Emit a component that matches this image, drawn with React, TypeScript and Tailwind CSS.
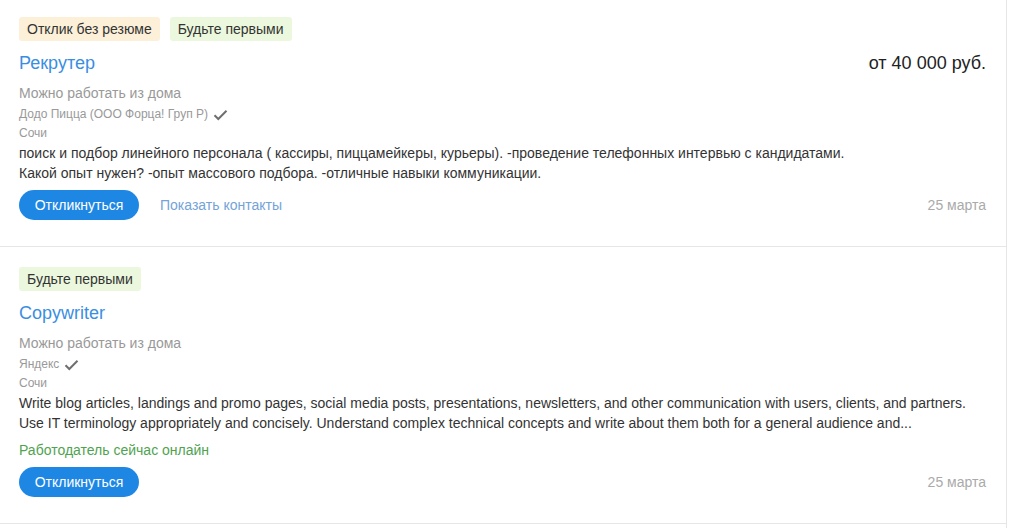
import React from "react";

type Vacancy = {
  badges: { label: string; tone: "beige" | "green" }[];
  title: string;
  salary?: string;
  remote: string;
  company: string;
  city: string;
  text: string[];
  online?: boolean;
  contacts?: boolean;
  date: string;
};

const vacancies: Vacancy[] = [
  {
    badges: [
      { label: "Отклик без резюме", tone: "beige" },
      { label: "Будьте первыми", tone: "green" },
    ],
    title: "Рекрутер",
    salary: "от 40 000 руб.",
    remote: "Можно работать из дома",
    company: "Додо Пицца (ООО Форца! Груп Р)",
    city: "Сочи",
    text: [
      "поиск и подбор линейного персонала ( кассиры, пиццамейкеры, курьеры). -проведение телефонных интервью с кандидатами.",
      "Какой опыт нужен? -опыт массового подбора. -отличные навыки коммуникации.",
    ],
    contacts: true,
    date: "25 марта",
  },
  {
    badges: [{ label: "Будьте первыми", tone: "green" }],
    title: "Copywriter",
    remote: "Можно работать из дома",
    company: "Яндекс",
    city: "Сочи",
    text: [
      "Write blog articles, landings and promo pages, social media posts, presentations, newsletters, and other communication with users, clients, and partners.",
      "Use IT terminology appropriately and concisely. Understand complex technical concepts and write about them both for a general audience and...",
    ],
    online: true,
    date: "25 марта",
  },
];

function Check() {
  return (
    <svg width="15" height="12" viewBox="0 0 15 12" className="ml-[5px] inline-block">
      <path d="M1.5 6.2 L5.3 10 L13.5 1.8" fill="none" stroke="#6f6f6f" strokeWidth="2" />
    </svg>
  );
}

function VacancyCard({ v, first }: { v: Vacancy; first: boolean }) {
  return (
    <div
      className={`border-b border-[#e6e6e6] pl-[19px] pr-[20px] pb-[26px] ${first ? "pt-[17px]" : "pt-[20px]"}`}
    >
      <div className="flex gap-[10px]">
        {v.badges.map((b) => (
          <span
            key={b.label}
            className={`h-[24px] rounded-[3px] px-[8px] text-[14px] leading-[24px] text-[#333] ${
              b.tone === "beige" ? "bg-[#fcf0d9]" : "bg-[#ebf8dd]"
            }`}
          >
            {b.label}
          </span>
        ))}
      </div>
      <div className="mt-[10px] flex items-center justify-between">
        <span className="text-[18px] leading-[24px] text-[#3a8ee2]">{v.title}</span>
        {v.salary && <span className="text-[18px] leading-[24px] text-[#222]">{v.salary}</span>}
      </div>
      <div className="mt-[8px] text-[14px] leading-[20px] text-[#999]">{v.remote}</div>
      <div className="mt-[2px] flex items-center text-[12px] leading-[19px] text-[#999]">
        {v.company}
        <Check />
      </div>
      <div className="text-[12px] leading-[19px] text-[#999]">{v.city}</div>
      <div className="text-[14px] leading-[20px] text-[#333]">
        {v.text.map((t) => (
          <div key={t}>{t}</div>
        ))}
      </div>
      {v.online && (
        <div className="mt-[7px] text-[14px] leading-[20px] text-[#4fa350]">Работодатель сейчас онлайн</div>
      )}
      <div className="mt-[7px] flex items-center justify-between">
        <div className="flex items-center gap-[21px]">
          <button className="h-[30px] w-[120px] rounded-full bg-[#1e87e4] text-[14px] text-white">
            Откликнуться
          </button>
          {v.contacts && <span className="text-[14px] text-[#74a3d8]">Показать контакты</span>}
        </div>
        <span className="text-[14px] text-[#aaa]">{v.date}</span>
      </div>
    </div>
  );
}

export default function App() {
  return (
    <div className="min-h-[528px] w-[1012px] bg-white font-['Liberation_Sans',Arial,sans-serif]">
      <div className="min-h-[528px] w-[1007px] border-r border-[#e6e6e6]">
        {vacancies.map((v, i) => (
          <VacancyCard key={v.title} v={v} first={i === 0} />
        ))}
      </div>
    </div>
  );
}
